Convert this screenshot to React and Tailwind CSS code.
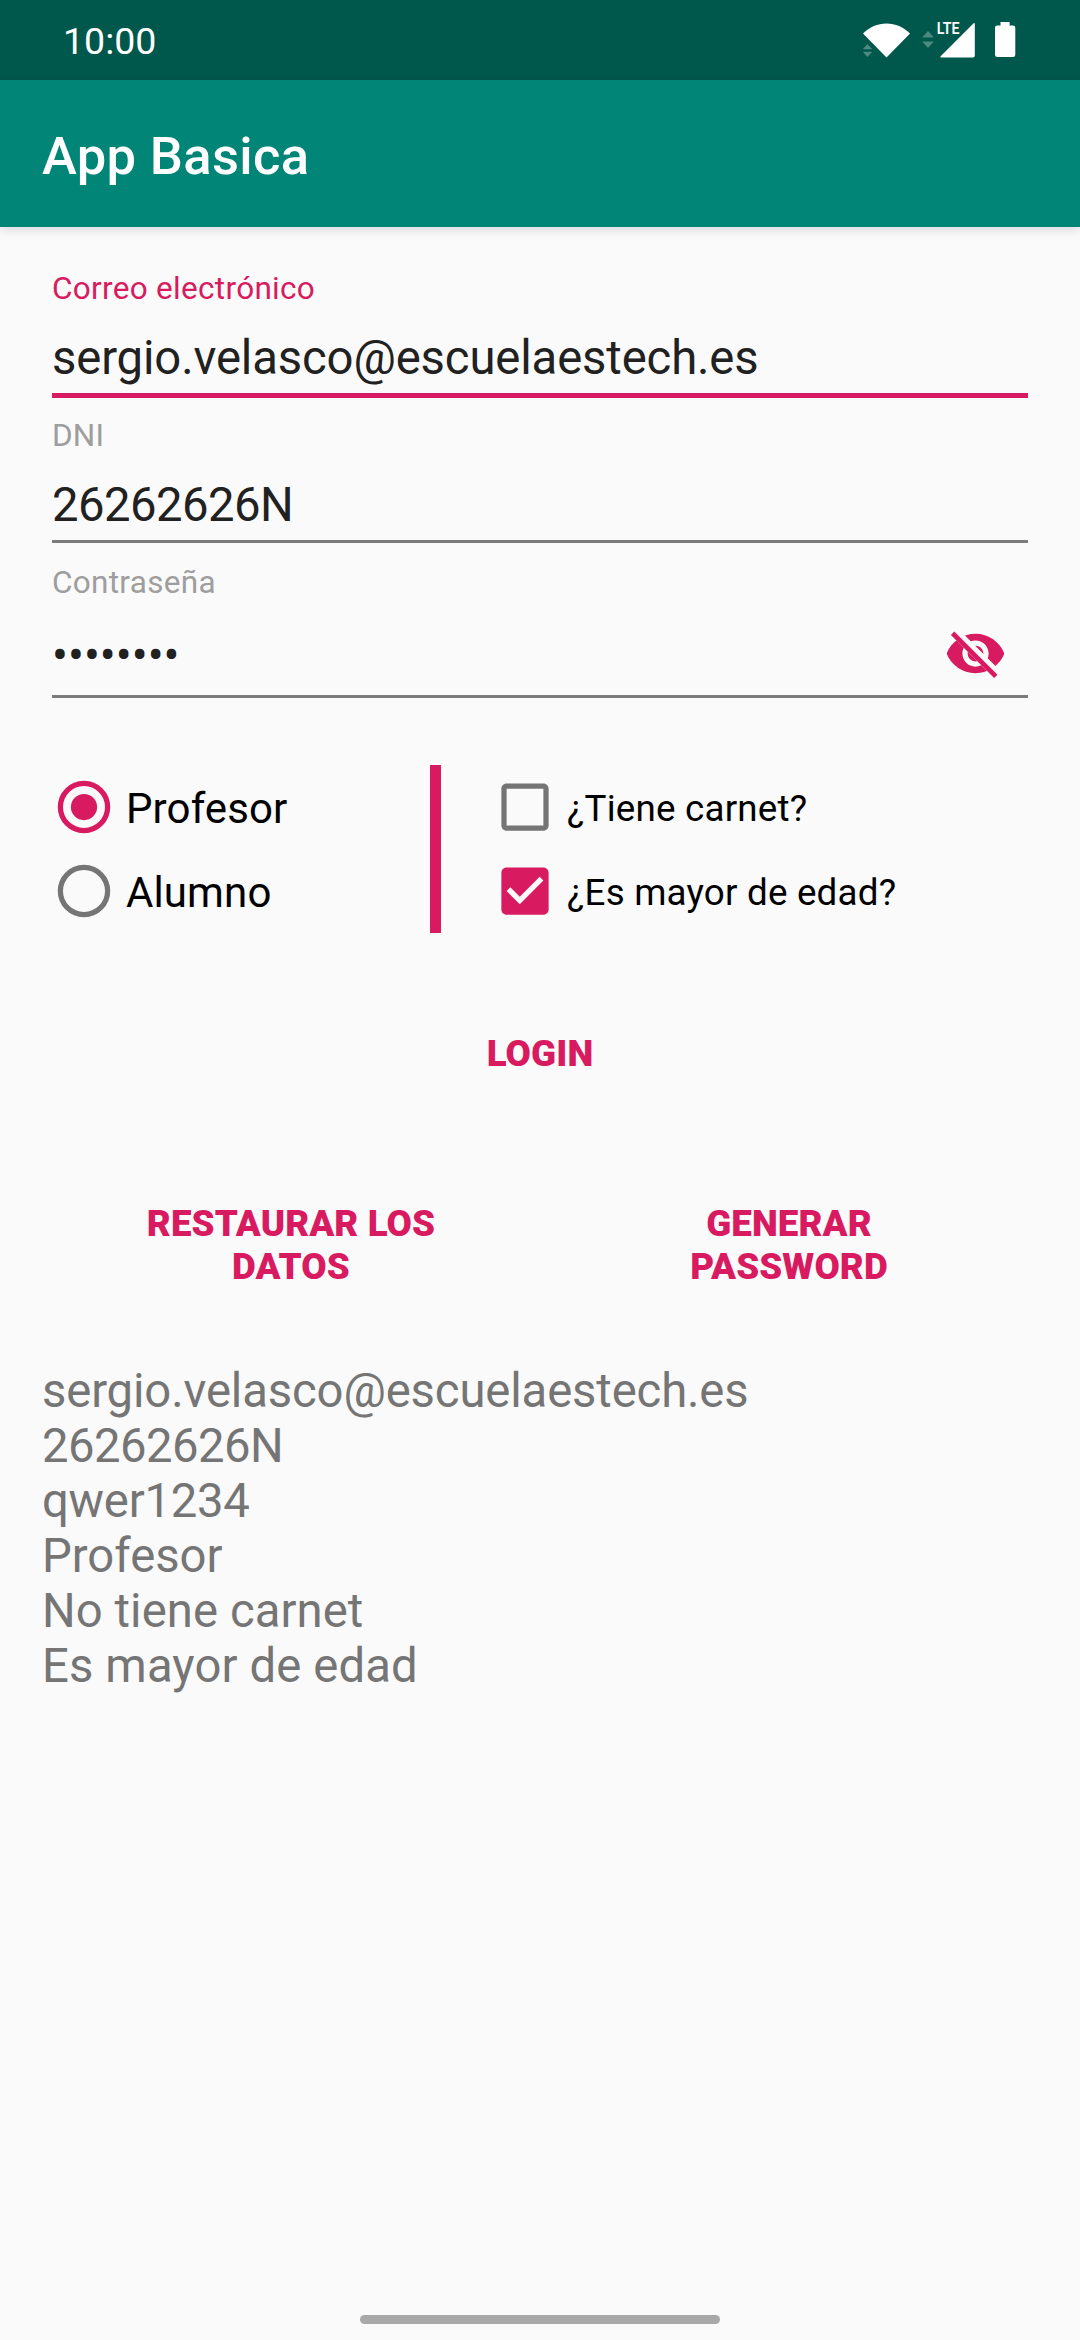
function StatusIcons() {
  return (
    <svg width="160" height="40" viewBox="860 20 160 40" className="shrink-0">
      <path d="M863 33.4C869.6 27 877.6 23.4 886.5 23.4S903.4 27 910 33.4L886.5 57.6Z" fill="#fff" />
      <g fill="#4d8981">
        <path d="M862.7 49.2L867.5 44L872.3 49.2ZM862.7 51.8L867.5 57L872.3 51.8Z" />
        <path d="M922.2 37.6L928 31L933.8 37.6ZM922.2 41.4L928 48L933.8 41.4Z" />
      </g>
      <path d="M940.6 56.2L973.4 23.4Q974.8 22.6 974.8 24V55.8Q974.8 57.6 973 57.6H941.2Q939.8 57.4 940.6 56.2Z" fill="#fff" />
      <text x="936.8" y="34.2" fill="#fff" fontFamily="Roboto" fontSize="15.8" fontWeight="600" textLength="22.8" lengthAdjust="spacingAndGlyphs">LTE</text>
      <path d="M1000.5 22H1009.6V25.4H1013Q1015.3 25.4 1015.3 27.7V54.8Q1015.3 57.1 1013 57.1H997.3Q995 57.1 995 54.8V27.7Q995 25.4 997.3 25.4H1000.5Z" fill="#fff" />
    </svg>
  );
}

function EyeOff() {
  return (
    <svg width="63" height="63" viewBox="0 0 24 24" fill="#d81b60">
      <clipPath id="slash">
        <path d="M2 4.27L19.73 22L22.27 19.46L4.54 1.73V1H23V23H1V4.27Z" />
      </clipPath>
      <path clipPath="url(#slash)" fillRule="evenodd" d="M12 4.5C7 4.5 2.73 7.61 1 12c1.73 4.39 6 7.5 11 7.5s9.27-3.11 11-7.5c-1.73-4.39-6-7.5-11-7.5zM12 17c-2.76 0-5-2.24-5-5s2.24-5 5-5 5 2.24 5 5-2.24 5-5 5zM12 9c-1.66 0-3 1.34-3 3s1.34 3 3 3 3-1.34 3-3-1.34-3-3-3z" />
      <path d="M3.27 4.27L19.74 20.74" stroke="#d81b60" strokeWidth="1.8" />
    </svg>
  );
}

function Radio({ label, checked }) {
  return (
    <div className="flex h-[84px] items-center">
      <svg width="84" height="84" viewBox="0 0 32 32" fill="none">
        <circle cx="16" cy="16" r="9" strokeWidth="2" stroke={checked ? "#d81b60" : "#757575"} />
        {checked && <circle cx="16" cy="16" r="5" fill="#d81b60" />}
      </svg>
      <span className="pt-[3px] text-[42px] leading-[50px] tracking-[0.12px] text-black">{label}</span>
    </div>
  );
}

function Checkbox({ label, checked }) {
  return (
    <div className="flex h-[84px] items-center">
      <svg width="84" height="84" viewBox="-4 -4 32 32">
        {checked ? (
          <path fill="#d81b60" d="M19 3H5c-1.11 0-2 .9-2 2v14c0 1.1.89 2 2 2h14c1.11 0 2-.9 2-2V5c0-1.1-.89-2-2-2zm-9 14l-5-5 1.41-1.41L10 14.17l7.59-7.59L19 8l-9 9z" />
        ) : (
          <path fill="#757575" d="M19 5v14H5V5h14m0-2H5c-1.1 0-2 .9-2 2v14c0 1.1.9 2 2 2h14c1.1 0 2-.9 2-2V5c0-1.1-.9-2-2-2z" />
        )}
      </svg>
      <span className="pt-[3px] text-[36.75px] leading-[44px] tracking-[0.2px] text-black">{label}</span>
    </div>
  );
}

const summary = [
  { text: "sergio.velasco@escuelaestech.es", tracking: "tracking-[-0.14px]" },
  { text: "26262626N", tracking: "tracking-[-0.55px]" },
  { text: "qwer1234", tracking: "tracking-[-0.25px]" },
  { text: "Profesor", tracking: "tracking-normal" },
  { text: "No tiene carnet", tracking: "tracking-[0.07px]" },
  { text: "Es mayor de edad", tracking: "tracking-[0.12px]" },
];

export default function App() {
  return (
    <div className="flex h-[2340px] w-[1080px] flex-col overflow-hidden bg-[#fafafa] font-[Roboto,sans-serif]">
      <div className="flex h-20 shrink-0 items-center justify-between bg-[#00574b] pr-[60px] pl-[63px]">
        <span className="pt-[2px] text-[37.5px] leading-[44px] text-white">10:00</span>
        <StatusIcons />
      </div>
      <header className="flex h-[147px] shrink-0 items-center bg-[#008577] px-[42px] pt-[5px] shadow-[0_3px_10px_rgba(0,0,0,0.13)]">
        <h1 className="text-[52.5px] leading-[60px] font-medium tracking-[0.35px] text-white">App Basica</h1>
      </header>

      <section className="mx-[52px] mt-[41px] flex flex-col">
        <label className="mb-[15px] h-10 text-[31.5px] leading-[41px] tracking-[0.3px] text-[#d81b60]">Correo electrónico</label>
        <div className="h-[75px] border-b-[5px] border-[#d81b60] text-[47.25px] leading-[70px] tracking-[-0.14px] text-[#212121]">sergio.velasco@escuelaestech.es</div>
        <label className="mt-[17px] mb-[15px] h-10 text-[31.5px] leading-[41px] tracking-[0.2px] text-[#9e9e9e]">DNI</label>
        <div className="h-[73px] border-b-[3px] border-[#7b7b7b] text-[47.25px] leading-[70px] tracking-[-0.55px] text-[#212121]">26262626N</div>
        <label className="mt-[19px] h-10 text-[31.5px] leading-[41px] tracking-[0.3px] text-[#9e9e9e]">Contraseña</label>
        <div className="flex h-24 items-center justify-between border-b-[3px] border-[#7b7b7b] pt-[10px] pr-[21px]">
          <span className="pt-[5px] text-[47.25px] leading-[60px] text-[#212121]">••••••••</span>
          <EyeOff />
        </div>
      </section>

      <section className="mt-[67px] flex h-[168px] pl-[42px]">
        <div className="w-[388px]">
          <Radio label="Profesor" checked />
          <Radio label="Alumno" />
        </div>
        <div className="w-[11px] bg-[#d81b60]" />
        <div className="ml-[42px]">
          <Checkbox label="¿Tiene carnet?" />
          <Checkbox label="¿Es mayor de edad?" checked />
        </div>
      </section>

      <button className="mt-[57px] h-[126px] self-center text-[36.75px] leading-[43px] font-black tracking-[0.1px] text-[#d81b60]">LOGIN</button>
      <div className="mx-[42px] mt-[66px] flex h-[126px] text-[36.75px] leading-[43px] font-black tracking-[0.1px] text-[#d81b60]">
        <button className="w-[498px]">RESTAURAR LOS<br />DATOS</button>
        <button className="w-[498px]">GENERAR<br />PASSWORD</button>
      </div>

      <section className="mx-[42px] mt-[56px] text-[47.25px] leading-[55px] text-[#757575]">
        {summary.map(({ text, tracking }) => (
          <p key={text} className={tracking}>{text}</p>
        ))}
      </section>

      <div className="mt-auto mb-4 h-[9px] w-[360px] shrink-0 self-center rounded-full bg-[#a8a8a8]" />
    </div>
  );
}
